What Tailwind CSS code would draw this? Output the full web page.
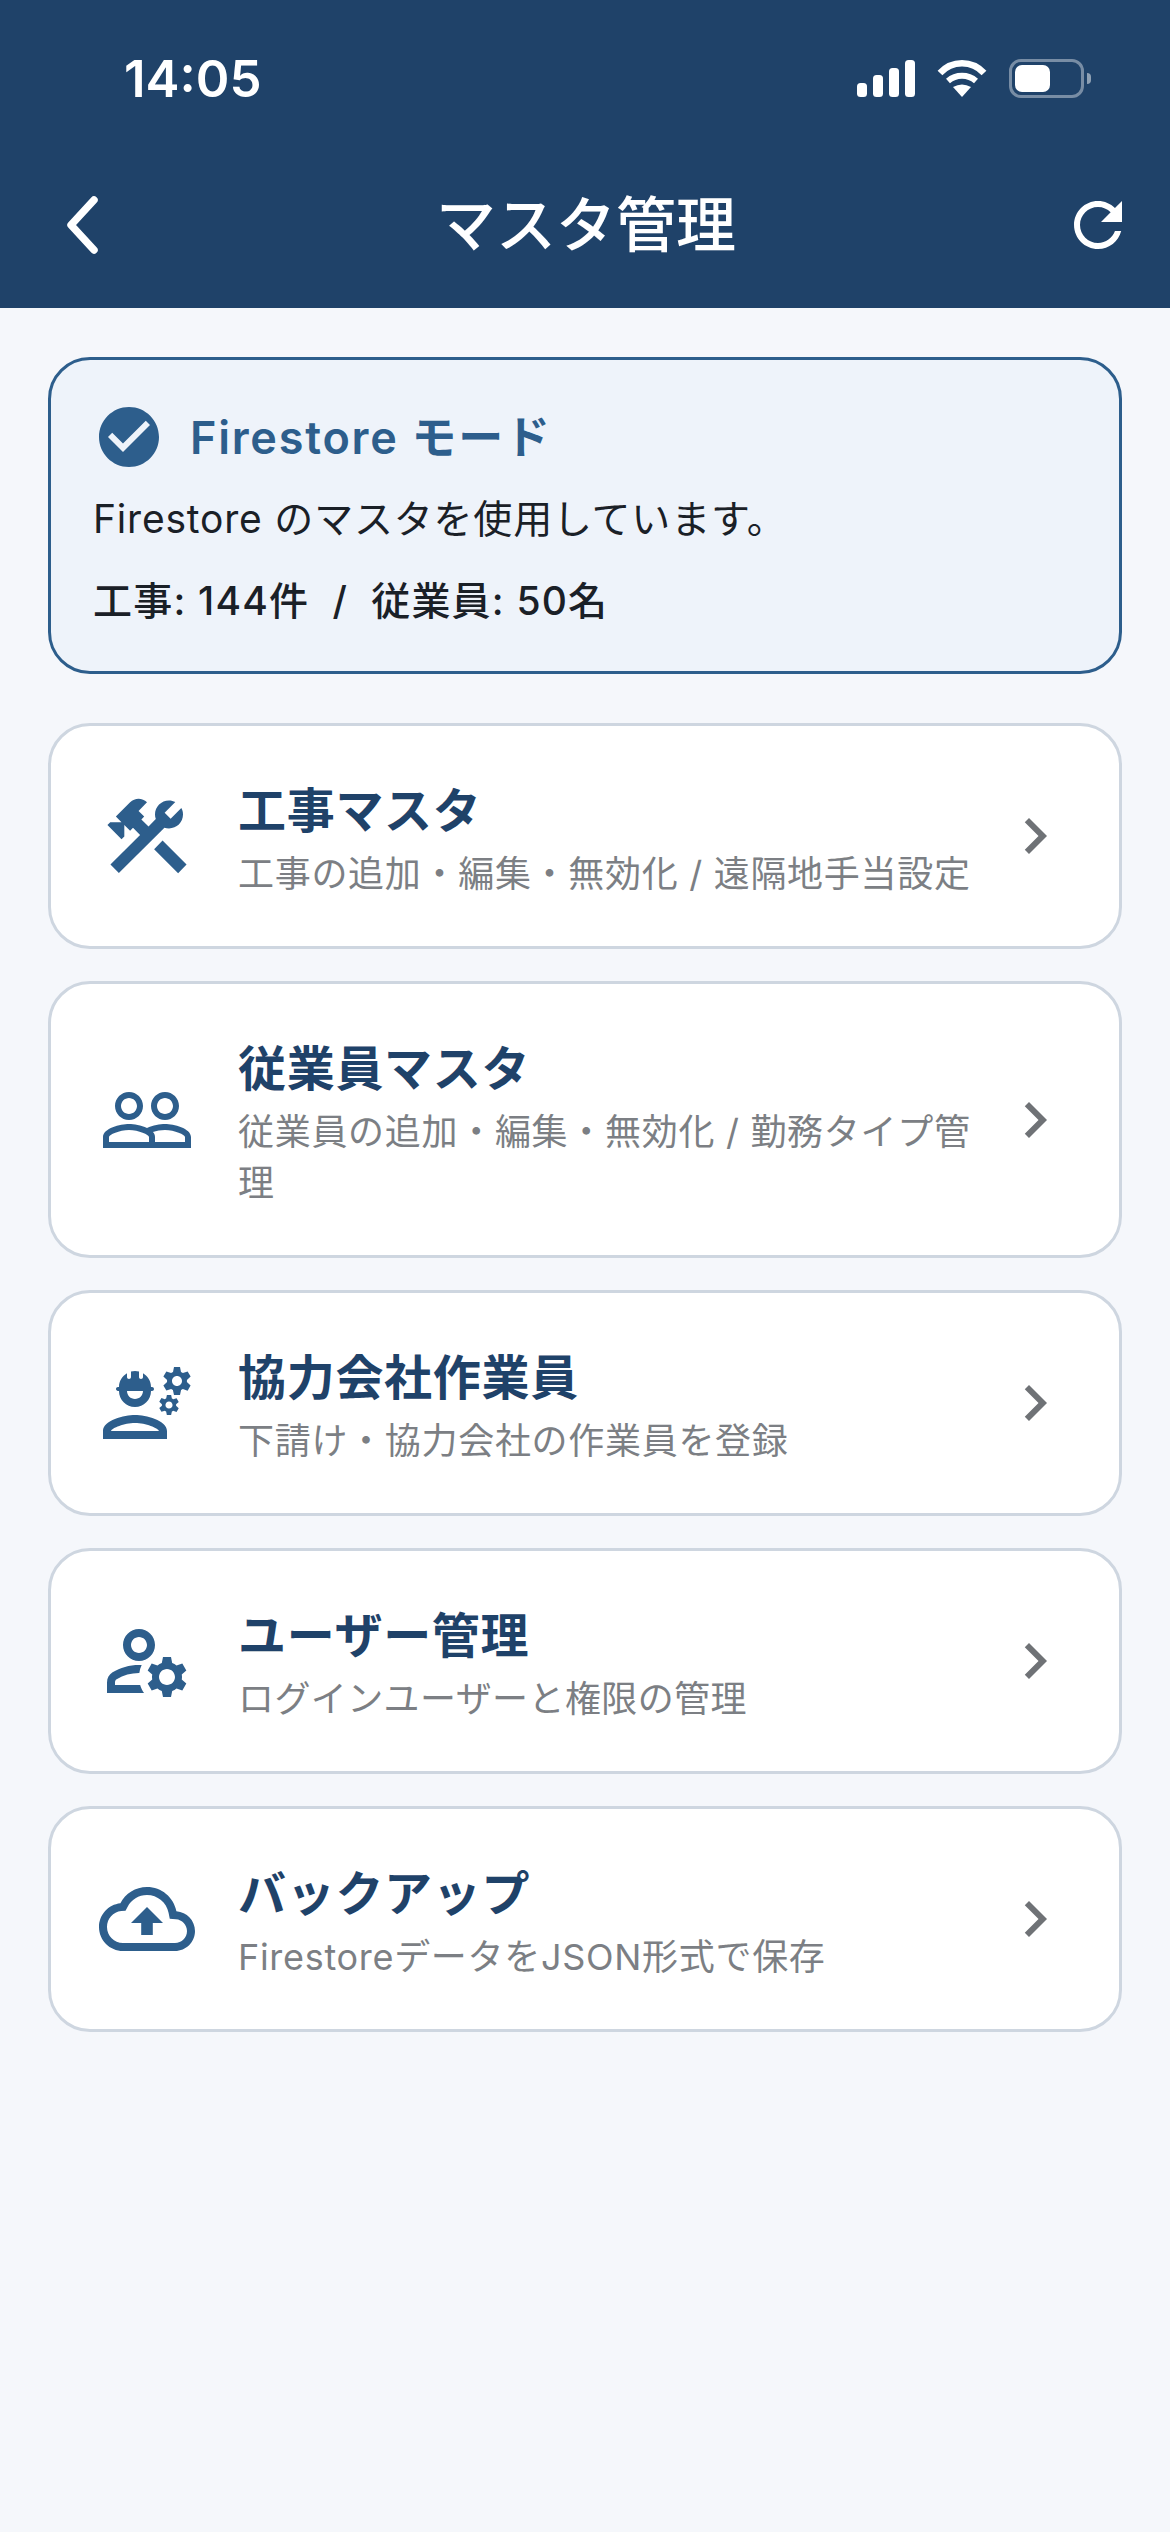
<!DOCTYPE html>
<html lang="ja">
<head>
    <meta charset="UTF-8">
    <meta name="viewport" content="width=device-width, initial-scale=1.0">
    <title>マスタ管理</title>
    <script src="https://cdn.jsdelivr.net/npm/@tailwindcss/browser@4"></script>
</head>
<body class="antialiased">
<div class="flex flex-col w-[1170px] h-[2532px] bg-[#f5f7fb] overflow-hidden font-['Inter','Noto_Sans_CJK_JP',sans-serif]">

    <!-- Header -->
    <header class="h-[308px] shrink-0 bg-[#1f4269] text-white flex flex-col">
        <div class="h-[157px] flex items-center justify-between pl-[124px] pr-[79px]">
            <span class="text-[51px] font-semibold leading-none">14:05</span>
            <div class="flex items-center gap-[22px]">
                <svg width="58" height="37" viewBox="0 0 58 37" fill="#fff"><rect x="0" y="23" width="10" height="14" rx="3.5"/><rect x="16" y="15" width="10" height="22" rx="3.5"/><rect x="32" y="8" width="10" height="29" rx="3.5"/><rect x="48" y="0" width="10" height="37" rx="3.5"/></svg>
                <svg width="50" height="37" viewBox="0 0 50 37" fill="none" stroke="#fff"><path d="M3 13C15 0 35 0 47 13" stroke-width="6.5"/><path d="M11 21C19 14 31 14 39 21" stroke-width="6"/><path d="M25 37L16 27Q25 22 34 27Z" fill="#fff" stroke="none"/></svg>
                <div class="flex items-center gap-[3px]">
                    <div class="w-[75px] h-[39px] rounded-[12px] border-[3px] border-white/40 p-[3px]">
                        <div class="w-[35px] h-full rounded-[7px] bg-white"></div>
                    </div>
                    <div class="w-[4px] h-[11px] rounded-r-full bg-white/50"></div>
                </div>
            </div>
        </div>
        <nav class="h-[151px] flex items-center justify-between px-[36px] pb-[15px]">
            <svg width="72" height="72" viewBox="0 0 72 72" fill="none" stroke="#fff" stroke-width="7.500" stroke-linecap="round" stroke-linejoin="round"><path d="M59 11L36 36L59 61" transform="translate(-1 0)"/></svg>
            <h1 class="text-[60px] font-medium leading-none ml-[2px]">マスタ管理</h1>
            <svg width="72" height="72" viewBox="0 0 24 24" fill="#fff"><path d="M17.650 6.350C16.200 4.900 14.210 4 12 4c-4.420 0-7.990 3.580-7.990 8s3.570 8 7.990 8c3.730 0 6.840-2.550 7.730-6h-2.080c-.820 2.330-3.040 4-5.650 4-3.310 0-6-2.690-6-6s2.690-6 6-6c1.660 0 3.140.690 4.220 1.780L13 11h7V4l-2.350 2.350z"/></svg>
        </nav>
    </header>

    <main class="flex flex-col gap-[49px] px-[48px] pt-[49px]">

        <!-- Mode banner -->
        <section class="h-[317px] rounded-[42px] border-[3px] border-[#2d5e8c] bg-[#eef3fa] pl-[42px] pt-[43px]">
            <div class="flex items-center gap-[25px] h-[68px]">
                <svg width="72" height="72" viewBox="0 0 24 24" fill="#2d5e8c"><path d="M12 2C6.480 2 2 6.480 2 12s4.480 10 10 10 10-4.480 10-10S17.520 2 12 2zm-2 15l-5-5 1.410-1.410L10 14.170l7.590-7.590L19 8l-9 9z"/></svg>
                <span class="text-[45px] font-semibold leading-none text-[#2d5e8c] tracking-[1.750px]">Firestore モード</span>
            </div>
            <p class="text-[39px] leading-none text-[#1a2027] tracking-[0.800px] mt-[28px]">Firestore のマスタを使用しています。</p>
            <p class="text-[39px] font-medium leading-none text-[#1a2027] tracking-[1.200px] mt-[43px]">工事: 144件 &nbsp;/&nbsp; 従業員: 50名</p>
        </section>

        <!-- Menu -->
        <div class="flex flex-col gap-[32px]">
            <a class="flex items-center h-[226px] rounded-[42px] border-[3px] border-[#ced6e0] bg-white pl-[48px] pr-[48px]">
                <svg class="shrink-0" width="96" height="96" viewBox="0 0 24 24" fill="#2d5e8c"><path d="M13.780 15.300L19.780 21.300L21.890 19.140L15.890 13.140L13.780 15.300M17.500 10.100C17.110 10.100 16.690 10.050 16.360 9.910L4.970 21.250L2.860 19.140L10.270 11.740L8.500 9.960L7.780 10.660L6.330 9.250V12.110L5.630 12.810L2.110 9.250L2.810 8.550H5.620L4.220 7.140L7.780 3.580C8.950 2.410 10.830 2.410 12 3.580L9.890 5.740L11.300 7.140L10.590 7.850L12.380 9.630L14.200 7.750C14.060 7.420 14 7 14 6.630C14 4.660 15.560 3.110 17.500 3.110C18.090 3.110 18.610 3.250 19.080 3.530L16.410 6.200L17.910 7.700L20.580 5.030C20.860 5.500 21 6 21 6.630C21 8.590 19.440 10.100 17.500 10.100Z"/></svg>
                <div class="flex-1 ml-[43px] pr-[16px] pt-[8px]">
                    <h2 class="text-[48px] font-semibold leading-[60px] text-[#1f4269] tracking-[0.700px]">工事マスタ</h2>
                    <p class="text-[36px] leading-[51px] text-[#7c7f84] tracking-[0.700px] mt-[8px]">工事の追加・編集・無効化 / 遠隔地手当設定</p>
                </div>
                <svg class="shrink-0" width="72" height="72" viewBox="0 0 24 24" fill="#6f7276"><path d="M10 6L8.590 7.410 13.170 12l-4.580 4.590L10 18l6-6z"/></svg>
            </a>
            <a class="flex items-center h-[277px] rounded-[42px] border-[3px] border-[#ced6e0] bg-white pl-[48px] pr-[48px]">
                <svg class="shrink-0" width="96" height="96" viewBox="0 0 24 24" fill="#2d5e8c" fill-rule="evenodd"><path d="M16.500 13c-1.200 0-3.070.340-4.500 1-1.430-.670-3.300-1-4.500-1C5.330 13 1 14.080 1 16.250V19h22v-2.750c0-2.170-4.330-3.250-6.500-3.250zm-4 4.500h-10v-1.250c0-.540 2.560-1.750 5-1.750s5 1.210 5 1.750v1.250zm9 0H14v-1.250c0-.460-.200-.860-.520-1.220.880-.300 1.960-.530 3.020-.530 2.440 0 5 1.210 5 1.750v1.250zM7.500 12c1.930 0 3.500-1.570 3.500-3.500S9.430 5 7.500 5 4 6.570 4 8.500 5.570 12 7.500 12zm0-5.500c1.100 0 2 .9 2 2s-.9 2-2 2-2-.9-2-2 .9-2 2-2zm9 5.500c1.930 0 3.500-1.570 3.500-3.500S18.430 5 16.500 5 13 6.570 13 8.500s1.570 3.500 3.500 3.500zm0-5.500c1.100 0 2 .9 2 2s-.9 2-2 2-2-.9-2-2 .9-2 2-2z"/></svg>
                <div class="flex-1 ml-[43px] pr-[16px] pt-[8px]">
                    <h2 class="text-[48px] font-semibold leading-[60px] text-[#1f4269] tracking-[0.700px]">従業員マスタ</h2>
                    <p class="text-[36px] leading-[51px] text-[#7c7f84] tracking-[0.700px] mt-[8px]">従業員の追加・編集・無効化 / 勤務タイプ管理</p>
                </div>
                <svg class="shrink-0" width="72" height="72" viewBox="0 0 24 24" fill="#6f7276"><path d="M10 6L8.590 7.410 13.170 12l-4.580 4.590L10 18l6-6z"/></svg>
            </a>
            <a class="flex items-center h-[226px] rounded-[42px] border-[3px] border-[#ced6e0] bg-white pl-[48px] pr-[48px]">
                <svg class="shrink-0" width="96" height="96" viewBox="0 0 24 24" fill="#2d5e8c"><path d="M9 15c-2.670 0-8 1.340-8 4v2h16v-2c0-2.660-5.330-4-8-4zm-6 4c.220-.720 3.310-2 6-2 2.700 0 5.800 1.290 6 2H3zM4.740 9H5c0 2.210 1.790 4 4 4s4-1.790 4-4h.260c.270 0 .490-.220.490-.490v-.020c0-.270-.220-.490-.490-.490H13c0-1.480-.810-2.750-2-3.450v.950c0 .280-.220.500-.500.500s-.500-.220-.500-.500V4.140C9.680 4.060 9.350 4 9 4s-.680.060-1 .140V5.500c0 .280-.220.500-.500.500S7 5.780 7 5.500v-.950C5.810 5.250 5 6.520 5 8h-.260c-.270 0-.490.220-.490.490v.030c0 .260.220.480.490.480zM11 9c0 1.100-.9 2-2 2s-2-.9-2-2h4zM21.980 6.230l.930-.830-.750-1.300-1.190.390c-.140-.110-.300-.200-.470-.270L20.250 3h-1.500l-.250 1.220c-.170.070-.330.160-.480.270l-1.180-.390-.750 1.300.930.830c-.020.170-.020.350 0 .520l-.930.850.750 1.300 1.200-.380c.130.100.280.180.430.250l.280 1.230h1.500l.270-1.220c.160-.070.300-.150.440-.250l1.190.380.750-1.300-.930-.850c.030-.190.020-.360.010-.530zM19.500 7.750c-.690 0-1.250-.560-1.250-1.250s.560-1.250 1.250-1.250 1.250.560 1.250 1.250-.560 1.250-1.250 1.250zM19.400 10.790l-.850.280c-.100-.080-.210-.140-.330-.190L18.040 10h-1.070l-.180.870c-.120.050-.240.120-.340.190l-.840-.280-.540.930.660.590c-.010.130-.010.250 0 .370l-.660.610.540.930.860-.270c.100.070.200.130.310.180l.180.880h1.070l.190-.870c.110-.050.220-.110.320-.180l.850.270.540-.930-.660-.610c.010-.130.010-.250 0-.370l.660-.590-.530-.930zm-1.900 2.600c-.490 0-.890-.400-.890-.890s.400-.890.890-.890.890.400.890.890-.400.890-.890.890z"/></svg>
                <div class="flex-1 ml-[43px] pr-[16px] pt-[8px]">
                    <h2 class="text-[48px] font-semibold leading-[60px] text-[#1f4269] tracking-[0.700px]">協力会社作業員</h2>
                    <p class="text-[36px] leading-[51px] text-[#7c7f84] tracking-[0.700px] mt-[8px]">下請け・協力会社の作業員を登録</p>
                </div>
                <svg class="shrink-0" width="72" height="72" viewBox="0 0 24 24" fill="#6f7276"><path d="M10 6L8.590 7.410 13.170 12l-4.580 4.590L10 18l6-6z"/></svg>
            </a>
            <a class="flex items-center h-[226px] rounded-[42px] border-[3px] border-[#ced6e0] bg-white pl-[48px] pr-[48px]">
                <svg class="shrink-0" width="96" height="96" viewBox="0 0 24 24" fill="#2d5e8c"><path d="M4 18v-.650c0-.340.160-.660.410-.810C6.100 15.530 8.030 15 10 15c.030 0 .050 0 .080.010.100-.700.300-1.370.590-1.980-.220-.020-.440-.030-.670-.030-2.420 0-4.680.670-6.610 1.820-.880.520-1.390 1.500-1.390 2.530V20h9.260c-.420-.600-.750-1.280-.970-2H4zM10 12c2.210 0 4-1.790 4-4s-1.790-4-4-4-4 1.790-4 4 1.790 4 4 4zm0-6c1.100 0 2 .9 2 2s-.9 2-2 2-2-.9-2-2 .9-2 2-2zM20.750 16c0-.220-.030-.420-.060-.630l1.140-1.010-1-1.730-1.450.490c-.320-.270-.680-.480-1.080-.630L18 11h-2l-.3 1.490c-.4.150-.760.360-1.080.630l-1.450-.490-1 1.730 1.140 1.010c-.030.210-.060.410-.060.630s.030.420.060.630l-1.140 1.010 1 1.730 1.450-.490c.320.270.680.480 1.080.630L16 21h2l.3-1.490c.4-.150.760-.360 1.080-.630l1.450.490 1-1.730-1.140-1.010c.030-.210.060-.410.060-.630zM17 18c-1.100 0-2-.9-2-2s.9-2 2-2 2 .9 2 2-.9 2-2 2z"/></svg>
                <div class="flex-1 ml-[43px] pr-[16px] pt-[8px]">
                    <h2 class="text-[48px] font-semibold leading-[60px] text-[#1f4269] tracking-[0.700px]">ユーザー管理</h2>
                    <p class="text-[36px] leading-[51px] text-[#7c7f84] tracking-[0.400px] mt-[8px]">ログインユーザーと権限の管理</p>
                </div>
                <svg class="shrink-0" width="72" height="72" viewBox="0 0 24 24" fill="#6f7276"><path d="M10 6L8.590 7.410 13.170 12l-4.580 4.590L10 18l6-6z"/></svg>
            </a>
            <a class="flex items-center h-[226px] rounded-[42px] border-[3px] border-[#ced6e0] bg-white pl-[48px] pr-[48px]">
                <svg class="shrink-0" width="96" height="96" viewBox="0 0 24 24" fill="#2d5e8c"><path d="M19.350 10.040C18.670 6.590 15.640 4 12 4 9.110 4 6.600 5.640 5.350 8.040 2.340 8.360 0 10.910 0 14c0 3.310 2.690 6 6 6h13c2.760 0 5-2.240 5-5 0-2.640-2.050-4.780-4.650-4.960zM19 18H6c-2.210 0-4-1.790-4-4 0-2.050 1.530-3.760 3.560-3.970l1.070-.110.500-.950C8.080 7.140 9.940 6 12 6c2.620 0 4.880 1.860 5.390 4.430l.300 1.500 1.530.110c1.560.100 2.780 1.410 2.780 2.960 0 1.650-1.350 3-3 3zM8 13h2.550v3h2.900v-3H16l-4-4z"/></svg>
                <div class="flex-1 ml-[43px] pr-[16px] pt-[8px]">
                    <h2 class="text-[48px] font-semibold leading-[60px] text-[#1f4269] tracking-[0.700px]">バックアップ</h2>
                    <p class="text-[36px] leading-[51px] text-[#7c7f84] tracking-[0.700px] mt-[8px]">FirestoreデータをJSON形式で保存</p>
                </div>
                <svg class="shrink-0" width="72" height="72" viewBox="0 0 24 24" fill="#6f7276"><path d="M10 6L8.590 7.410 13.170 12l-4.580 4.590L10 18l6-6z"/></svg>
            </a>
        </div>
    </main>
</div>
</body>
</html>
